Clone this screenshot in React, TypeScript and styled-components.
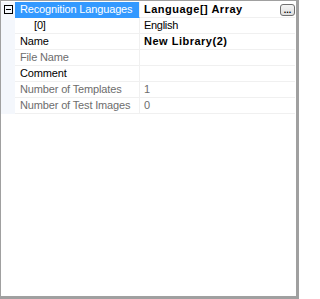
import React from 'react';
import styled, { createGlobalStyle } from 'styled-components';

const Global = createGlobalStyle`
  html, body {
    margin: 0;
    padding: 0;
    background: #ffffff;
  }
`;

type Prop = {
  name: string;
  value: string;
  indent?: boolean;
  dim?: boolean;
  bold?: boolean;
  selected?: boolean;
  expander?: boolean;
  button?: boolean;
};

const props: Prop[] = [
  { name: 'Recognition Languages', value: 'Language[] Array', bold: true, selected: true, expander: true, button: true },
  { name: '[0]', value: 'English', indent: true },
  { name: 'Name', value: 'New Library(2)', bold: true },
  { name: 'File Name', value: '', dim: true },
  { name: 'Comment', value: '' },
  { name: 'Number of Templates', value: '1', dim: true },
  { name: 'Number of Test Images', value: '0', dim: true },
];

const Frame = styled.div`
  width: 299px;
  height: 299px;
  box-sizing: border-box;
  border: 1px solid #a0a0a0;
  border-right-width: 3px;
  border-bottom-width: 3px;
  background: #ffffff;
  font-family: 'Liberation Sans', Arial, sans-serif;
  font-size: 11px;
  letter-spacing: -0.15px;
  color: #000000;
  padding-top: 1px;
`;

const Grid = styled.div`
  display: flex;
  flex-direction: column;
  width: 294px;
`;

const Row = styled.div`
  display: grid;
  grid-template-columns: 14px 125px 1fr;
  height: 16px;
`;

const Gutter = styled.div`
  background: #f4f7fc;
  display: flex;
  align-items: flex-start;
  justify-content: center;
  padding-top: 3px;
`;

const Expander = styled.div`
  width: 9px;
  height: 9px;
  box-sizing: border-box;
  border: 1px solid #000000;
  position: relative;
  margin-left: 1px;

  &::after {
    content: '';
    position: absolute;
    left: 1px;
    top: 3px;
    width: 5px;
    height: 1px;
    background: #000000;
  }
`;

const NameCell = styled.div<{ $selected?: boolean; $dim?: boolean; $indent?: boolean }>`
  background: ${(p) => (p.$selected ? '#3399ff' : '#ffffff')};
  color: ${(p) => (p.$selected ? '#ffffff' : p.$dim ? '#6d6d6d' : '#000000')};
  border-bottom: 1px solid ${(p) => (p.$selected ? '#3399ff' : '#f0f0f0')};
  border-right: 1px solid #f0f0f0;
  padding-left: ${(p) => (p.$indent ? '19px' : '5px')};
  line-height: 15px;
  white-space: nowrap;
  overflow: hidden;
`;

const ValueCell = styled.div<{ $dim?: boolean; $bold?: boolean }>`
  display: flex;
  align-items: center;
  justify-content: space-between;
  color: ${(p) => (p.$dim ? '#6d6d6d' : '#000000')};
  font-weight: ${(p) => (p.$bold ? 'bold' : 'normal')};
  letter-spacing: ${(p) => (p.$bold ? '0.5px' : '-0.3px')};
  border-bottom: 1px solid #f0f0f0;
  padding-left: 4px;
  padding-right: 0;
  line-height: 15px;
  white-space: nowrap;
`;

const Ellipsis = styled.button`
  width: 15px;
  height: 12px;
  box-sizing: border-box;
  border: 1px solid #707070;
  border-radius: 3px;
  background: linear-gradient(#f4f4f4, #dedede);
  padding: 0;
  margin-top: 1px;
  font-family: 'Liberation Sans', Arial, sans-serif;
  font-size: 9px;
  font-weight: bold;
  letter-spacing: 0;
  line-height: 9px;
  color: #000000;
  display: flex;
  align-items: flex-end;
  justify-content: center;
`;

export default function App() {
  return (
    <>
      <Global />
      <Frame>
        <Grid>
          {props.map((p) => (
            <Row key={p.name}>
              <Gutter>{p.expander && <Expander />}</Gutter>
              <NameCell $selected={p.selected} $dim={p.dim} $indent={p.indent}>
                {p.name}
              </NameCell>
              <ValueCell $dim={p.dim} $bold={p.bold}>
                <span>{p.value}</span>
                {p.button && <Ellipsis>...</Ellipsis>}
              </ValueCell>
            </Row>
          ))}
        </Grid>
      </Frame>
    </>
  );
}
